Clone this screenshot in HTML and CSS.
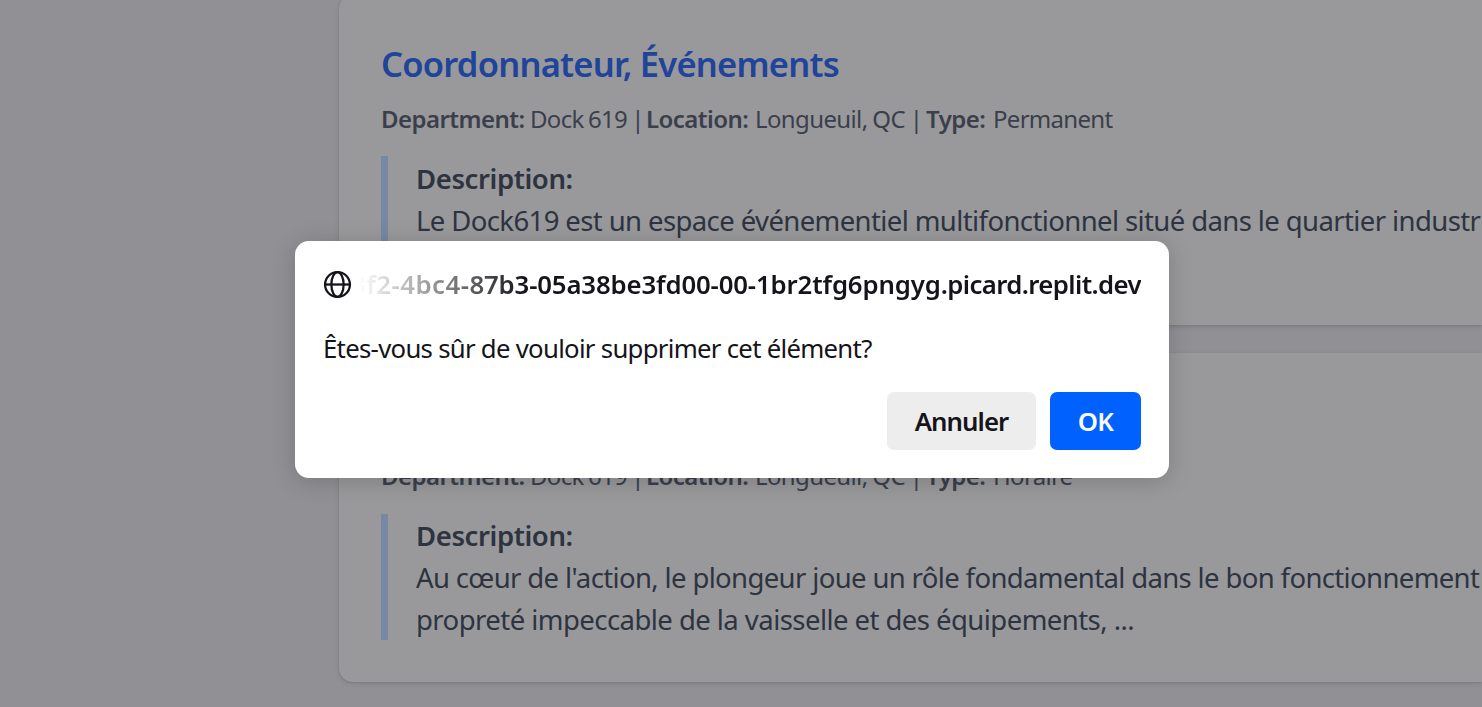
FILE: index.html
```html
<!DOCTYPE html>
<html lang="fr">
<head>
<meta charset="utf-8">
<title>Offres d'emploi</title>
<link rel="stylesheet" href="styles.css">
</head>
<body>
<main class="page">
  <article class="card">
    <h2 class="title">Coordonnateur, Événements</h2>
    <p class="meta"><b>Department:</b><span>Dock 619 |</span><b>Location:</b><span class="place">Longueuil, QC |</span><b>Type:</b><span>Permanent</span></p>
    <section class="description">
      <h3 class="label">Description:</h3>
      <p class="line">Le Dock619 est un espace événementiel multifonctionnel situé dans le quartier industr</p>
    </section>
  </article>
  <article class="card">
    <h2 class="title"></h2>
    <p class="meta"><b>Department:</b><span>Dock 619 |</span><b>Location:</b><span class="place">Longueuil, QC |</span><b>Type:</b><span>Horaire</span></p>
    <section class="description">
      <h3 class="label">Description:</h3>
      <p class="line line-wide">Au cœur de l'action, le plongeur joue un rôle fondamental dans le bon fonctionnement</p>
      <p class="line line-last">propreté impeccable de la vaisselle et des équipements, ...</p>
    </section>
  </article>
</main>
<div class="dialog" role="dialog">
  <header class="origin">
    <svg class="globe" viewBox="0 0 28 28" fill="none" stroke="#15141a" stroke-width="2.2">
      <circle cx="14" cy="14" r="12"/>
      <ellipse cx="14" cy="14" rx="5.9" ry="12"/>
      <path d="M2 14h24"/>
    </svg>
    <div class="host"><span><span class="host-start">3f2-4bc4-</span>87b3-05a38be3fd00-00-1br2tfg6pngyg<span class="host-end">.picard.replit.dev</span></span></div>
  </header>
  <p class="message">Êtes-vous sûr de vouloir supprimer cet élément?</p>
  <footer class="actions">
    <button class="button cancel">Annuler</button>
    <button class="button ok">OK</button>
  </footer>
</div>
</body>
</html>
```

FILE: styles.css
```css
* { box-sizing: border-box; }
body {
  margin: 0;
  height: 707px;
  overflow: hidden;
  background: #919095;
  font-family: "Noto Sans", sans-serif;
  color: #2e3340;
}
h2, h3, p { margin: 0; white-space: nowrap; }
.page {
  display: flex;
  flex-direction: column;
  gap: 28px;
  margin: -5px 0 0 339px;
}
.card {
  height: 329.5px;
  padding: 42px 0 42px 42px;
  border-radius: 14px 0 0 14px;
  background: #99999b;
  box-shadow: 0 2px 5px rgba(0, 0, 0, .1), 0 1px 2px rgba(0, 0, 0, .08);
}
.title {
  height: 52.5px;
  margin-bottom: 11px;
  font-size: 34.5px;
  line-height: 54.5px;
  font-weight: 600;
  letter-spacing: -.76px;
  color: #20449a;
}
.meta {
  display: grid;
  grid-template-columns: 149px 116px 109px 171px 67px auto;
  height: 36.75px;
  margin-bottom: 18.75px;
  font-size: 24px;
  line-height: 36.75px;
  letter-spacing: -.7px;
  word-spacing: -1.2px;
  color: #3a3f4b;
}
.meta b { font-weight: 600; letter-spacing: -.55px; }
.meta .place { letter-spacing: -.62px; word-spacing: -.8px; }
.description {
  height: 126px;
  padding-left: 28px;
  border-left: 7px solid #7688a3;
  font-size: 27.5px;
  line-height: 42px;
}
.label { padding-top: 1.7px; font-size: 27.5px; font-weight: 600; letter-spacing: -.4px; }
.line { letter-spacing: -.605px; }
.line-wide { letter-spacing: -.64px; }
.line-last { letter-spacing: -.55px; }
.dialog {
  position: absolute;
  left: 295px;
  top: 241px;
  width: 874px;
  height: 237px;
  padding: 28px;
  border-radius: 14px;
  background: #fff;
  color: #15141a;
  box-shadow: 0 3px 24px rgba(0, 0, 0, .18);
}
.origin { display: flex; align-items: center; gap: 7px; height: 30.5px; }
.globe { width: 29px; height: 29px; flex: none; }
.host {
  flex: 1;
  display: flex;
  justify-content: flex-end;
  overflow: hidden;
  font-size: 25.75px;
  line-height: 36px;
  font-weight: 600;
  letter-spacing: -.14px;
  white-space: nowrap;
  -webkit-mask-image: linear-gradient(to right, transparent, #000 165px);
  mask-image: linear-gradient(to right, transparent, #000 165px);
}
.host-start { letter-spacing: .5px; }
.host-end { letter-spacing: -.6px; }
.message {
  margin-top: 30.5px;
  font-size: 25.75px;
  line-height: 36px;
  letter-spacing: -.72px;
}
.actions { display: flex; justify-content: flex-end; gap: 14px; margin-top: 26px; }
.button {
  height: 58px;
  border: 0;
  border-radius: 7px;
  padding: 0;
  font: 600 25.75px "Noto Sans", sans-serif;
}
.cancel { width: 149px; background: #ededed; color: #15141a; letter-spacing: -.95px; }
.ok { width: 91px; background: #0061ff; color: #fbfbfe; letter-spacing: -.6px; }
```
